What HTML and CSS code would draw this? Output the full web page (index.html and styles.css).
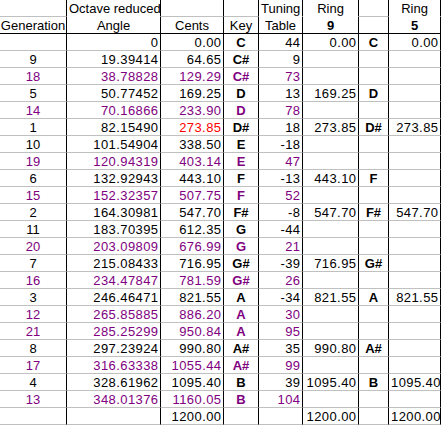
FILE: index.html
```html
<!DOCTYPE html>
<html>
<head>
<meta charset="utf-8">
<link rel="stylesheet" href="styles.css">
</head>
<body>
<div class="sheet">
  <div class="row head1">
    <div class="c a"></div>
    <div class="c b ctr nb">Octave reduced</div>
    <div class="c cc"></div>
    <div class="c d"></div>
    <div class="c e ctr nb">Tuning</div>
    <div class="c f ctr nb">Ring</div>
    <div class="c g"></div>
    <div class="c h ctr nb">Ring</div>
  </div>
  <div class="row head2">
    <div class="c a ctr gen">Generation</div>
    <div class="c b ctr">Angle</div>
    <div class="c cc ctr">Cents</div>
    <div class="c d ctr">Key</div>
    <div class="c e ctr">Table</div>
    <div class="c f ctr bold">9</div>
    <div class="c g"></div>
    <div class="c h ctr bold">5</div>
  </div>

  <div class="row"><div class="c a ctr"></div><div class="c b num">0</div><div class="c cc num">0.00</div><div class="c d key">C</div><div class="c e num">44</div><div class="c f num">0.00</div><div class="c g key">C</div><div class="c h num">0.00</div></div>
  <div class="row"><div class="c a ctr">9</div><div class="c b num">19.39414</div><div class="c cc num">64.65</div><div class="c d key">C#</div><div class="c e num">9</div><div class="c f num"></div><div class="c g key"></div><div class="c h num"></div></div>
  <div class="row alt"><div class="c a ctr">18</div><div class="c b num">38.78828</div><div class="c cc num">129.29</div><div class="c d key">C#</div><div class="c e num">73</div><div class="c f num"></div><div class="c g key"></div><div class="c h num"></div></div>
  <div class="row"><div class="c a ctr">5</div><div class="c b num">50.77452</div><div class="c cc num">169.25</div><div class="c d key">D</div><div class="c e num">13</div><div class="c f num">169.25</div><div class="c g key">D</div><div class="c h num"></div></div>
  <div class="row alt"><div class="c a ctr">14</div><div class="c b num">70.16866</div><div class="c cc num">233.90</div><div class="c d key">D</div><div class="c e num">78</div><div class="c f num"></div><div class="c g key"></div><div class="c h num"></div></div>
  <div class="row"><div class="c a ctr">1</div><div class="c b num">82.15490</div><div class="c cc num red">273.85</div><div class="c d key">D#</div><div class="c e num">18</div><div class="c f num">273.85</div><div class="c g key">D#</div><div class="c h num">273.85</div></div>
  <div class="row"><div class="c a ctr">10</div><div class="c b num">101.54904</div><div class="c cc num">338.50</div><div class="c d key">E</div><div class="c e num">-18</div><div class="c f num"></div><div class="c g key"></div><div class="c h num"></div></div>
  <div class="row alt"><div class="c a ctr">19</div><div class="c b num">120.94319</div><div class="c cc num">403.14</div><div class="c d key">E</div><div class="c e num">47</div><div class="c f num"></div><div class="c g key"></div><div class="c h num"></div></div>
  <div class="row"><div class="c a ctr">6</div><div class="c b num">132.92943</div><div class="c cc num">443.10</div><div class="c d key">F</div><div class="c e num">-13</div><div class="c f num">443.10</div><div class="c g key">F</div><div class="c h num"></div></div>
  <div class="row alt"><div class="c a ctr">15</div><div class="c b num">152.32357</div><div class="c cc num">507.75</div><div class="c d key">F</div><div class="c e num">52</div><div class="c f num"></div><div class="c g key"></div><div class="c h num"></div></div>
  <div class="row"><div class="c a ctr">2</div><div class="c b num">164.30981</div><div class="c cc num">547.70</div><div class="c d key">F#</div><div class="c e num">-8</div><div class="c f num">547.70</div><div class="c g key">F#</div><div class="c h num">547.70</div></div>
  <div class="row"><div class="c a ctr">11</div><div class="c b num">183.70395</div><div class="c cc num">612.35</div><div class="c d key">G</div><div class="c e num">-44</div><div class="c f num"></div><div class="c g key"></div><div class="c h num"></div></div>
  <div class="row alt"><div class="c a ctr">20</div><div class="c b num">203.09809</div><div class="c cc num">676.99</div><div class="c d key">G</div><div class="c e num">21</div><div class="c f num"></div><div class="c g key"></div><div class="c h num"></div></div>
  <div class="row"><div class="c a ctr">7</div><div class="c b num">215.08433</div><div class="c cc num">716.95</div><div class="c d key">G#</div><div class="c e num">-39</div><div class="c f num">716.95</div><div class="c g key">G#</div><div class="c h num"></div></div>
  <div class="row alt"><div class="c a ctr">16</div><div class="c b num">234.47847</div><div class="c cc num">781.59</div><div class="c d key">G#</div><div class="c e num">26</div><div class="c f num"></div><div class="c g key"></div><div class="c h num"></div></div>
  <div class="row"><div class="c a ctr">3</div><div class="c b num">246.46471</div><div class="c cc num">821.55</div><div class="c d key">A</div><div class="c e num">-34</div><div class="c f num">821.55</div><div class="c g key">A</div><div class="c h num">821.55</div></div>
  <div class="row alt"><div class="c a ctr">12</div><div class="c b num">265.85885</div><div class="c cc num">886.20</div><div class="c d key">A</div><div class="c e num">30</div><div class="c f num"></div><div class="c g key"></div><div class="c h num"></div></div>
  <div class="row alt"><div class="c a ctr">21</div><div class="c b num">285.25299</div><div class="c cc num">950.84</div><div class="c d key">A</div><div class="c e num">95</div><div class="c f num"></div><div class="c g key"></div><div class="c h num"></div></div>
  <div class="row"><div class="c a ctr">8</div><div class="c b num">297.23924</div><div class="c cc num">990.80</div><div class="c d key">A#</div><div class="c e num">35</div><div class="c f num">990.80</div><div class="c g key">A#</div><div class="c h num"></div></div>
  <div class="row alt"><div class="c a ctr">17</div><div class="c b num">316.63338</div><div class="c cc num">1055.44</div><div class="c d key">A#</div><div class="c e num">99</div><div class="c f num"></div><div class="c g key"></div><div class="c h num"></div></div>
  <div class="row"><div class="c a ctr">4</div><div class="c b num">328.61962</div><div class="c cc num">1095.40</div><div class="c d key">B</div><div class="c e num">39</div><div class="c f num">1095.40</div><div class="c g key">B</div><div class="c h num">1095.40</div></div>
  <div class="row alt"><div class="c a ctr">13</div><div class="c b num">348.01376</div><div class="c cc num">1160.05</div><div class="c d key">B</div><div class="c e num">104</div><div class="c f num"></div><div class="c g key"></div><div class="c h num"></div></div>
  <div class="row"><div class="c a ctr"></div><div class="c b num"></div><div class="c cc num">1200.00</div><div class="c d key"></div><div class="c e num"></div><div class="c f num">1200.00</div><div class="c g key"></div><div class="c h num">1200.00</div></div>
</div>
</body>
</html>
```

FILE: styles.css
```css
html, body {
  margin: 0;
  padding: 0;
  background: #ffffff;
}
.sheet {
  width: 441px;
  font-family: "Liberation Sans", Arial, sans-serif;
  font-size: 13px;
  color: #000000;
}
.row {
  display: grid;
  grid-template-columns: 67px 94px 63px 35px 44px 56px 30px 52px;
  height: 17px;
}
.c {
  box-sizing: border-box;
  height: 17px;
  border-right: 1px solid #000000;
  border-bottom: 1px solid #c0c0c0;
  line-height: 17px;
  white-space: nowrap;
  overflow: hidden;
  padding: 0 2px;
}
.c.gen {
  padding: 0;
}
.c.nb {
  border-bottom-color: #ffffff;
}
.head2 .c {
  border-bottom-color: #000000;
}
.ctr {
  text-align: center;
}
.num {
  text-align: right;
  letter-spacing: 0.4px;
  padding-right: 1.6px;
}
.key {
  text-align: center;
  font-weight: bold;
}
.bold {
  font-weight: bold;
}
.alt {
  color: #800080;
}
.red {
  color: #ff0000;
}
```
